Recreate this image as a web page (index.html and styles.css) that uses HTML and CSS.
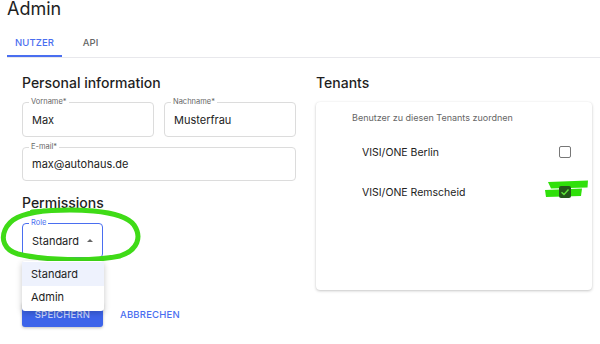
FILE: index.html
```html
<!DOCTYPE html>
<html lang="de">
<head>
<meta charset="utf-8">
<title>Admin</title>
<link rel="stylesheet" href="styles.css">
</head>
<body>
<div class="page">
  <h1 class="title">Admin</h1>
  <div class="tabs">
    <div class="tab active">NUTZER</div>
    <div class="tab">API</div>
  </div>
  <div class="content">
    <div class="col left">
      <h2 class="heading">Personal information</h2>
      <div class="row">
        <div class="field"><span class="label">Vorname*</span><span class="value">Max</span></div>
        <div class="field"><span class="label">Nachname*</span><span class="value">Musterfrau</span></div>
      </div>
      <div class="field wide"><span class="label">E-mail*</span><span class="value">max@autohaus.de</span></div>
      <h2 class="heading perm">Permissions</h2>
      <div class="select-wrap">
        <div class="field select"><span class="label">Role</span><span class="value">Standard</span><span class="arrow"></span></div>
        <svg class="circle" width="150" height="64" viewBox="0 0 150 64">
          <path d="M30 3 C 70 -1, 120 0, 132 16 C 140 28, 136 41, 118 47 C 90 53, 40 51, 16 45 C 2 41, -1 30, 3 21 C 8 10, 18 5, 42 2" fill="none" stroke="#3fdb17" stroke-width="5" stroke-linecap="round"/>
        </svg>
        <div class="menu">
          <div class="item selected">Standard</div>
          <div class="item">Admin</div>
        </div>
      </div>
      <div class="actions">
        <button class="btn primary">SPEICHERN</button>
        <button class="btn text">ABBRECHEN</button>
      </div>
    </div>
    <div class="col right">
      <h2 class="heading">Tenants</h2>
      <div class="card">
        <div class="card-sub">Benutzer zu diesen Tenants zuordnen</div>
        <div class="tenant"><span>VISI/ONE Berlin</span><span class="cb"></span></div>
        <div class="tenant"><span>VISI/ONE Remscheid</span><span class="cb-wrap"><svg class="hl" width="48" height="20" viewBox="0 0 48 20"><path d="M4 2 L44 0.5 L43.5 7.5 L7 8.5 Z" fill="#2fe00a"/><path d="M1 10 L38 8.5 L37 16 L2 17 Z" fill="#2fe00a"/></svg><span class="cb checked"><svg width="12" height="12" viewBox="0 0 12 12"><path d="M2.5 6.2 L5 8.5 L9.5 3.5" fill="none" stroke="#5fe63a" stroke-width="1.4"/></svg></span></span></div>
      </div>
    </div>
  </div>
</div>
</body>
</html>
```

FILE: styles.css
```css
* { box-sizing: border-box; }
html, body { margin: 0; padding: 0; background: #fff; }
body { font-family: Inter, "Noto Sans", sans-serif; color: #222; overflow: hidden; width: 600px; height: 344px; }
.page { width: 600px; }
.title { margin: 0; padding-left: 7px; font-size: 18px; line-height: 17px; font-weight: 400; color: #1e1e1e; }
.tabs { display: flex; margin: 11px 0 0 7px; border-bottom: 1px solid #e8e8ec; height: 30px; }
.tab { width: 55px; text-align: center; font-size: 9.5px; font-weight: 500; color: #666; line-height: 30px; letter-spacing: 0.1px; }
.tab + .tab { width: 57px; }
.tab.active { color: #4a6ef0; border-bottom: 2px solid #4a6ef0; line-height: 29px; }
.content { display: flex; gap: 20px; padding: 0 8px 0 22px; }
.col.left { width: 274px; }
.col.right { width: 276px; }
.heading { margin: 0; font-size: 14px; font-weight: 500; line-height: 18px; margin-top: 16px; height: 18px; color: #1f1f1f; }
.heading.perm { margin-top: 13px; }
.row { display: flex; gap: 10px; margin-top: 10px; }
.field { position: relative; height: 35px; border: 1px solid #dcdcdc; border-radius: 4px; display: flex; align-items: center; padding-left: 9px; width: 132px; }
.field.wide { width: 274px; margin-top: 10px; height: 34px; }
.label { position: absolute; top: -6px; left: 6px; padding: 0 2px; background: #fff; font-size: 7.5px; line-height: 10px; color: #666; }
.value { font-size: 11px; color: #222; }
.select-wrap { position: relative; margin-top: 11px; height: 35px; }
.field.select { width: 81px; border-color: #4a6ef0; border-width: 1.3px; }
.field.select .label { color: #4a6ef0; }
.arrow { position: absolute; right: 9px; top: 15px; width: 0; height: 0; border-left: 3px solid transparent; border-right: 3px solid transparent; border-bottom: 3px solid #666; }
.circle { position: absolute; left: -20px; top: -14px; pointer-events: none; z-index: 3; overflow: visible; }
.menu { position: absolute; left: 0; top: 38px; width: 82px; background: #fff; border-radius: 3px; box-shadow: 0 2px 6px rgba(0,0,0,0.22); padding: 1px 0 2px; z-index: 4; }
.item { height: 23px; line-height: 23px; padding-left: 9px; font-size: 11px; color: #222; }
.item.selected { background: #eef2fd; height: 24px; line-height: 24px; }
.actions { display: flex; align-items: center; gap: 8px; margin-top: 43px; }
.btn { font-family: inherit; border: none; font-size: 9.5px; font-weight: 500; letter-spacing: 0.2px; cursor: pointer; }
.btn.primary { width: 81px; height: 25px; background: #3d64ea; color: #c9d4fb; border-radius: 3px; box-shadow: 0 1px 3px rgba(0,0,0,0.25); }
.btn.text { background: none; color: #4a6ef0; padding: 0 9px; height: 26px; }
.card { margin-top: 10px; height: 188px; border-radius: 4px; box-shadow: 0 1px 3px rgba(0,0,0,0.22), 0 0 1px rgba(0,0,0,0.08); padding: 10px 21px 0 36px; }
.card-sub { font-size: 9px; color: #666; line-height: 11px; }
.tenant { display: flex; justify-content: space-between; align-items: center; height: 40px; padding-left: 10px; font-size: 10.5px; color: #222; }
.card-sub + .tenant { margin-top: 9px; }
.cb { display: inline-block; width: 12px; height: 12px; border: 1.5px solid #777; border-radius: 2px; }
.cb-wrap { position: relative; display: inline-block; width: 12px; height: 12px; }
.hl { position: absolute; left: -15px; top: -6px; }
.cb.checked { position: relative; border: none; background: #23561a; display: block; }
.cb.checked svg { display: block; }
```
